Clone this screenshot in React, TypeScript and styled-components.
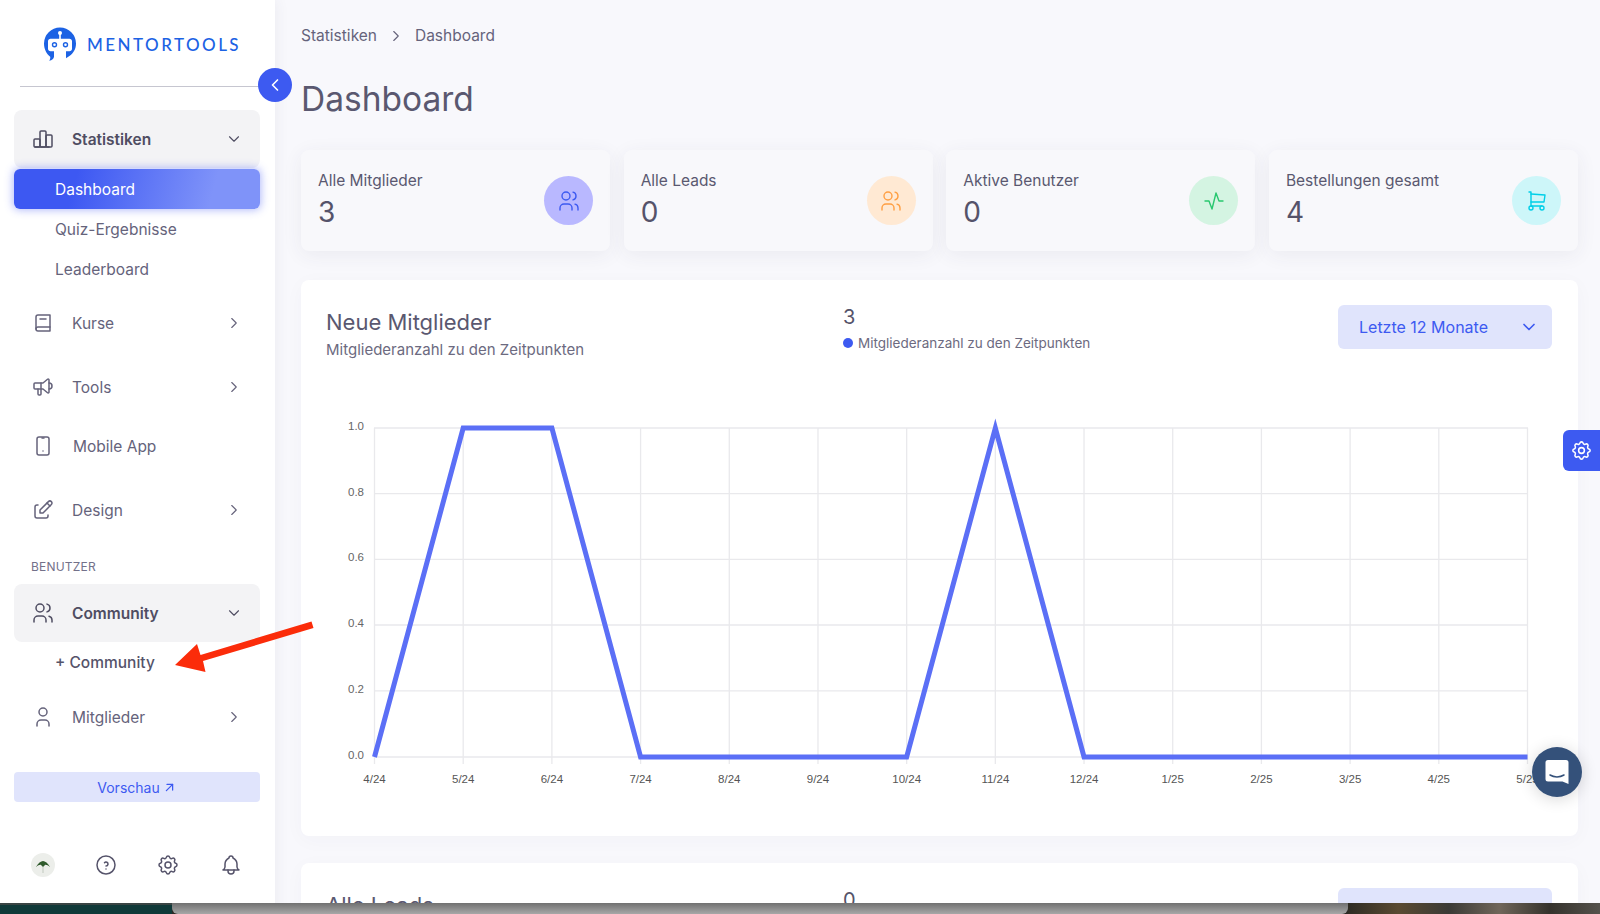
import React from "react";
import styled, { createGlobalStyle } from "styled-components";
import {
  TbChartBar, TbBook2, TbSpeakerphone, TbDeviceMobile, TbEdit, TbUsers, TbUser,
  TbHelpCircle, TbSettings, TbBell, TbChevronDown, TbChevronRight, TbChevronLeft,
  TbArrowUpRight, TbActivity, TbShoppingCart,
} from "react-icons/tb";

const Global = createGlobalStyle`
  html, body { margin: 0; padding: 0; height: 914px; overflow: hidden; }
  body { font-family: "Inter", "Liberation Sans", sans-serif; color: #5a5870; }
  * { box-sizing: border-box; }
`;

const Page = styled.div`
  position: relative; display: flex; width: 1600px; height: 914px; overflow: hidden; background: #f8f8fc;
`;
const Sidebar = styled.aside`
  position: relative; z-index: 2; flex: 0 0 275px; height: 914px; background: #fff;
  box-shadow: 0 0 14px rgba(60, 60, 90, 0.08); padding: 0 15px 0 14px; display: flex; flex-direction: column;
`;
const LogoRow = styled.div`
  height: 60px; margin-top: 14px; margin-left: 28px; display: flex; align-items: center; gap: 9px;
`;
const LogoText = styled.span`
  font-family: "Lato", sans-serif; font-size: 17px; font-weight: 500; letter-spacing: 2.45px; color: #1c62e4;
`;
const Divider = styled.div`
  height: 1px; background: #c6c6d0; margin: 12px -5px 0 6px;
`;
const CollapseButton = styled.div`
  position: absolute; top: 68px; right: -17px; width: 34px; height: 34px; border-radius: 50%;
  background: #3d5af1; color: #fff; display: flex; align-items: center; justify-content: center;
`;
const Nav = styled.nav`
  display: flex; flex-direction: column; margin-top: 23px;
`;
const NavRow = styled.div<{ $open?: boolean; $top?: number; $h?: number }>`
  display: flex; align-items: center; height: ${(p) => p.$h ?? 58}px; margin-top: ${(p) => p.$top ?? 0}px;
  padding: 0 17px 0 17px; border-radius: 8px; background: ${(p) => (p.$open ? "#f3f3f5" : "transparent")};
  color: ${(p) => (p.$open ? "#4f4d62" : "#65637b")};
  svg { flex: none; }
`;
const NavLabel = styled.span<{ $open?: boolean; $shift?: number }>`
  flex: 1; margin-left: ${(p) => 17 + (p.$shift ?? 0)}px; font-size: 15.5px; font-weight: ${(p) => (p.$open ? 600 : 400)};
`;
const SubItem = styled.div<{ $active?: boolean; $strong?: boolean }>`
  height: 40px; display: flex; align-items: center; padding-left: 41px; border-radius: 6px; font-size: 15.5px;
  color: ${(p) => (p.$active ? "#fff" : p.$strong ? "#55536a" : "#65637b")};
  font-weight: ${(p) => (p.$strong ? 500 : 400)};
  background: ${(p) => (p.$active ? "linear-gradient(105deg, #3d58f2 25%, #7f93f9 80%)" : "transparent")};
  box-shadow: ${(p) => (p.$active ? "0 0 8px 1px rgba(80, 100, 245, 0.45)" : "none")};
  margin-top: ${(p) => (p.$active ? 1 : 0)}px;
`;
const SectionLabel = styled.div`
  margin: 20px 0 9px 17px; height: 16px; line-height: 16px; font-size: 12px; color: #73718a; letter-spacing: 0.2px;
`;
const PreviewButton = styled.div`
  margin-top: 26px; height: 30px; border-radius: 4px; background: #e0e4fc; color: #3d5af1;
  font-size: 14px; display: flex; align-items: center; justify-content: center; gap: 2px;
`;
const SideFooter = styled.div`
  margin-top: 43px; height: 40px; padding: 0 17px; display: flex; align-items: center; justify-content: space-between; color: #55536a;
`;
const Avatar = styled.div`
  width: 24px; height: 24px; border-radius: 50%; background: #eceeea; overflow: hidden; display: flex;
`;
const Main = styled.main`
  flex: 1; min-width: 0; padding: 0 22px 0 26px; display: flex; flex-direction: column;
`;
const Crumbs = styled.div`
  margin-top: 26px; height: 20px; display: flex; align-items: center; gap: 10px; font-size: 15.5px; color: #65637b;
`;
const Heading = styled.h1`
  margin: 30px 0 0; height: 48px; line-height: 48px; font-size: 33.5px; font-weight: 400; color: #5a5870;
`;
const CardGrid = styled.section`
  margin-top: 27px; display: grid; grid-template-columns: repeat(4, 1fr); gap: 13.5px;
`;
const StatCard = styled.div`
  height: 101px; padding: 20px 17px; border-radius: 8px; background: #f8f8fb;
  box-shadow: 0 4px 20px rgba(60, 60, 90, 0.07); display: flex; justify-content: space-between; align-items: center;
`;
const StatText = styled.div`
  display: flex; flex-direction: column; align-self: flex-start;
`;
const StatLabel = styled.span`
  font-size: 15.5px; line-height: 22px; color: #5a5870;
`;
const StatValue = styled.span`
  font-size: 28px; line-height: 36px; color: #55536a; margin-top: 2px;
`;
const StatIcon = styled.div<{ $bg: string; $fg: string }>`
  width: 49px; height: 49px; border-radius: 50%; background: ${(p) => p.$bg}; color: ${(p) => p.$fg};
  display: flex; align-items: center; justify-content: center;
`;
const Panel = styled.section<{ $top: number }>`
  margin-top: ${(p) => p.$top}px; background: #fff; border-radius: 8px; flex: none;
  box-shadow: 0 4px 20px rgba(60, 60, 90, 0.03);
`;
const PanelHeader = styled.header`
  display: grid; grid-template-columns: 517px 1fr 214px; padding: 25px 26px 0 25px; height: 119px;
`;
const PanelTitle = styled.h2`
  margin: 2px 0 0; font-size: 22px; line-height: 30px; font-weight: 400; color: #5a5870;
`;
const PanelSub = styled.p`
  margin: 3px 0 0; font-size: 15px; line-height: 20px; color: #6c6a80;
`;
const Count = styled.div`
  font-size: 20px; line-height: 24px; color: #55536a; margin-bottom: 5px;
`;
const Legend = styled.div`
  display: flex; align-items: center; gap: 5px; font-size: 13.5px; line-height: 18px; color: #6c6a80;
`;
const LegendDot = styled.i`
  width: 10px; height: 10px; border-radius: 50%; background: #3d5af1;
`;
const RangeSelect = styled.div`
  height: 44px; border-radius: 6px; background: #e0e4fc; color: #3d5af1; font-size: 16px;
  display: flex; align-items: center; justify-content: space-between; padding: 0 13px 0 21px;
`;
const ChartSvg = styled.svg`
  display: block; width: 1277px; height: 437px;
`;
const Overlay = styled.svg`
  position: absolute; left: 0; top: 0; z-index: 5; pointer-events: none;
`;
const SettingsTab = styled.div`
  position: absolute; z-index: 4; right: 0; top: 430px; width: 37px; height: 41px; background: #3d5af1; color: #fff;
  border-radius: 6px 0 0 6px; display: flex; align-items: center; justify-content: center;
`;
const ChatButton = styled.div`
  position: absolute; z-index: 4; left: 1532px; top: 747px; width: 50px; height: 50px; border-radius: 50%;
  background: #34517a; display: flex; align-items: center; justify-content: center;
  box-shadow: 0 2px 16px rgba(0, 0, 0, 0.16);
`;
const DesktopStrip = styled.div`
  position: absolute; z-index: 6; left: 0; right: 0; bottom: 0; height: 11px; display: flex;
  background: #2c2a25;
`;
const StripLeft = styled.div`
  flex: 0 0 172px; background: #103a39; border-top: 2px solid #3a4544;
`;
const StripDock = styled.div`
  flex: 1; border-radius: 0 0 6px 6px; background: linear-gradient(180deg, #717171, #a7a7a7);
`;
const StripPhoto = styled.div`
  flex: 0 0 252px;
  background: linear-gradient(90deg, #2f2c24, #5a4a32 20%, #3b3a36 40%, #70665a 60%, #35322c 80%, #55524c);
`;

const xs = Array.from({ length: 14 }, (_, i) => 374.5 + (i * 1153) / 13);
const xLabels = ["4/24","5/24","6/24","7/24","8/24","9/24","10/24","11/24","12/24","1/25","2/25","3/25","4/25","5/25"];
const yTicks = [["1.0", 429], ["0.8", 494.6], ["0.6", 560.4], ["0.4", 626], ["0.2", 691.8], ["0.0", 758]] as const;
const values = [0, 1, 1, 0, 0, 0, 0, 1, 0, 0, 0, 0, 0, 0];
const linePoints = values.map((v, i) => `${xs[i]},${v ? 429 : 758}`).join(" ");

const stats = [
  { label: "Alle Mitglieder", value: "3", bg: "#b9b8ff", fg: "#3d5af1", Icon: TbUsers },
  { label: "Alle Leads", value: "0", bg: "#ffe9d3", fg: "#ff9f43", Icon: TbUsers },
  { label: "Aktive Benutzer", value: "0", bg: "#d4f4e2", fg: "#28c76f", Icon: TbActivity },
  { label: "Bestellungen gesamt", value: "4", bg: "#cdf6f9", fg: "#00cfe8", Icon: TbShoppingCart },
];

function Chart() {
  return (
    <ChartSvg viewBox="301 400 1277 437">
      {yTicks.map(([t, y]) => (
        <g key={t}>
          <line x1={374} x2={1528} y1={y} y2={y} stroke="#e9e9ec" strokeWidth={1.3} />
          <text x={364} y={y + 2} textAnchor="end" fontFamily="Liberation Sans" fontSize={11.5} fill="#666">{t}</text>
        </g>
      ))}
      {xs.map((x, i) => (
        <g key={xLabels[i]}>
          <line x1={x} x2={x} y1={429} y2={765} stroke="#e9e9ec" strokeWidth={1.3} />
          <text x={x} y={784} textAnchor="middle" fontFamily="Liberation Sans" fontSize={11.5} fill="#555">{xLabels[i]}</text>
        </g>
      ))}
      <polyline points={linePoints} fill="none" stroke="#5b6ff6" strokeWidth={5} strokeLinejoin="miter" />
    </ChartSvg>
  );
}

function Logo() {
  return (
    <svg width="36" height="36" viewBox="0 0 36 36">
      <path d="M18 1.5A16 16 0 0 1 34 17.5c0 5.5-2.6 9.8-6.6 12.6l-3.4 2.2v-7h3.5c1.4 0 2.5-1.1 2.5-2.5v-7.6c0-1.4-1.1-2.5-2.5-2.5H8.5C7.1 12.7 6 13.8 6 15.2v7.6c0 1.4 1.1 2.5 2.5 2.5H12v5.2c0 2.2-2 3.9-4.8 4.2 1-1.4 1.2-2.7 1-4C4.4 27.700 2 23 2 17.500A16 16 0 0 1 18 1.500Z" fill="#1c62e4" />
      <circle cx="18" cy="7" r="2" fill="#fff" />
      <rect x="17.200" y="8" width="1.600" height="5" fill="#fff" />
      <circle cx="12.500" cy="18.800" r="2" fill="none" stroke="#1c62e4" strokeWidth="1.400" />
      <circle cx="23.500" cy="18.800" r="2" fill="none" stroke="#1c62e4" strokeWidth="1.400" />
    </svg>
  );
}

function Section({ label, value }: { label: string; value: string }) {
  return (
    <PanelHeader>
      <div>
        <PanelTitle>{label}</PanelTitle>
        <PanelSub>Mitgliederanzahl zu den Zeitpunkten</PanelSub>
      </div>
      <div>
        <Count>{value}</Count>
        <Legend><LegendDot />Mitgliederanzahl zu den Zeitpunkten</Legend>
      </div>
      <RangeSelect>Letzte 12 Monate<TbChevronDown size={20} /></RangeSelect>
    </PanelHeader>
  );
}

export default function App() {
  return (
    <Page>
      <Global />
      <Sidebar>
        <LogoRow><Logo /><LogoText>MENTORTOOLS</LogoText></LogoRow>
        <Divider />
        <CollapseButton><TbChevronLeft size={20} /></CollapseButton>
        <Nav>
          <NavRow $open><TbChartBar size={24} strokeWidth={1.5} /><NavLabel $open>Statistiken</NavLabel><TbChevronDown size={18} strokeWidth={1.5} /></NavRow>
          <SubItem $active>Dashboard</SubItem>
          <SubItem>Quiz-Ergebnisse</SubItem>
          <SubItem>Leaderboard</SubItem>
          <NavRow $top={5}><TbBook2 size={24} strokeWidth={1.5} /><NavLabel>Kurse</NavLabel><TbChevronRight size={18} strokeWidth={1.5} /></NavRow>
          <NavRow $top={6}><TbSpeakerphone size={24} strokeWidth={1.5} /><NavLabel>Tools</NavLabel><TbChevronRight size={18} strokeWidth={1.5} /></NavRow>
          <NavRow $top={6} $h={48}><TbDeviceMobile size={24} strokeWidth={1.5} /><NavLabel $shift={1}>Mobile App</NavLabel></NavRow>
          <NavRow $top={11}><TbEdit size={24} strokeWidth={1.5} /><NavLabel>Design</NavLabel><TbChevronRight size={18} strokeWidth={1.5} /></NavRow>
          <SectionLabel>BENUTZER</SectionLabel>
          <NavRow $open><TbUsers size={24} strokeWidth={1.5} /><NavLabel $open>Community</NavLabel><TbChevronDown size={18} strokeWidth={1.5} /></NavRow>
          <SubItem $strong>+ Community</SubItem>
          <NavRow $top={6}><TbUser size={24} strokeWidth={1.5} /><NavLabel>Mitglieder</NavLabel><TbChevronRight size={18} strokeWidth={1.5} /></NavRow>
        </Nav>
        <PreviewButton>Vorschau<TbArrowUpRight size={15} /></PreviewButton>
        <SideFooter>
          <Avatar>
            <svg width="24" height="24" viewBox="0 0 24 24">
              <path d="M5 14c2-4 5-6 7-6s5 2 7 6c-2-1.500-4-2.500-5-2l-2 2-2-2c-1-.5-3 .5-5 2Z" fill="#2f5a2c" />
              <path d="M12 14v6" stroke="#cfd4cc" strokeWidth="1.500" />
            </svg>
          </Avatar>
          <TbHelpCircle size={24} strokeWidth={1.5} />
          <TbSettings size={24} strokeWidth={1.5} />
          <TbBell size={24} strokeWidth={1.5} />
        </SideFooter>
      </Sidebar>
      <Main>
        <Crumbs>Statistiken<TbChevronRight size={18} strokeWidth={1.5} />Dashboard</Crumbs>
        <Heading>Dashboard</Heading>
        <CardGrid>
          {stats.map((s) => (
            <StatCard key={s.label}>
              <StatText>
                <StatLabel>{s.label}</StatLabel>
                <StatValue>{s.value}</StatValue>
              </StatText>
              <StatIcon $bg={s.bg} $fg={s.fg}><s.Icon size={24} strokeWidth={1.4} /></StatIcon>
            </StatCard>
          ))}
        </CardGrid>
        <Panel $top={29}>
          <Section label="Neue Mitglieder" value="3" />
          <Chart />
        </Panel>
        <Panel $top={27}>
          <Section label="Alle Leads" value="0" />
        </Panel>
      </Main>
      <SettingsTab><TbSettings size={23} strokeWidth={1.6} /></SettingsTab>
      <ChatButton>
        <svg width="24" height="26" viewBox="0 0 24 26">
          <path d="M3 1h18a2.500 2.500 0 0 1 2.500 2.500V25l-6-2.500H3A2.500 2.500 0 0 1 .5 20V3.500A2.500 2.500 0 0 1 3 1Z" fill="#fff" />
          <path d="M5 16c4 2.500 10 2.500 14 0" fill="none" stroke="#34517a" strokeWidth="1.500" strokeLinecap="round" />
        </svg>
      </ChatButton>
      <Overlay width="330" height="700" viewBox="0 0 330 700">
        <path d="M311.500 621.500 L313.500 628 L203 661 L205.500 672 L175 665 L197 644 L200.500 655 Z" fill="#fb2c0a" />
      </Overlay>
      <DesktopStrip>
        <StripLeft />
        <StripDock />
        <StripPhoto />
      </DesktopStrip>
    </Page>
  );
}
